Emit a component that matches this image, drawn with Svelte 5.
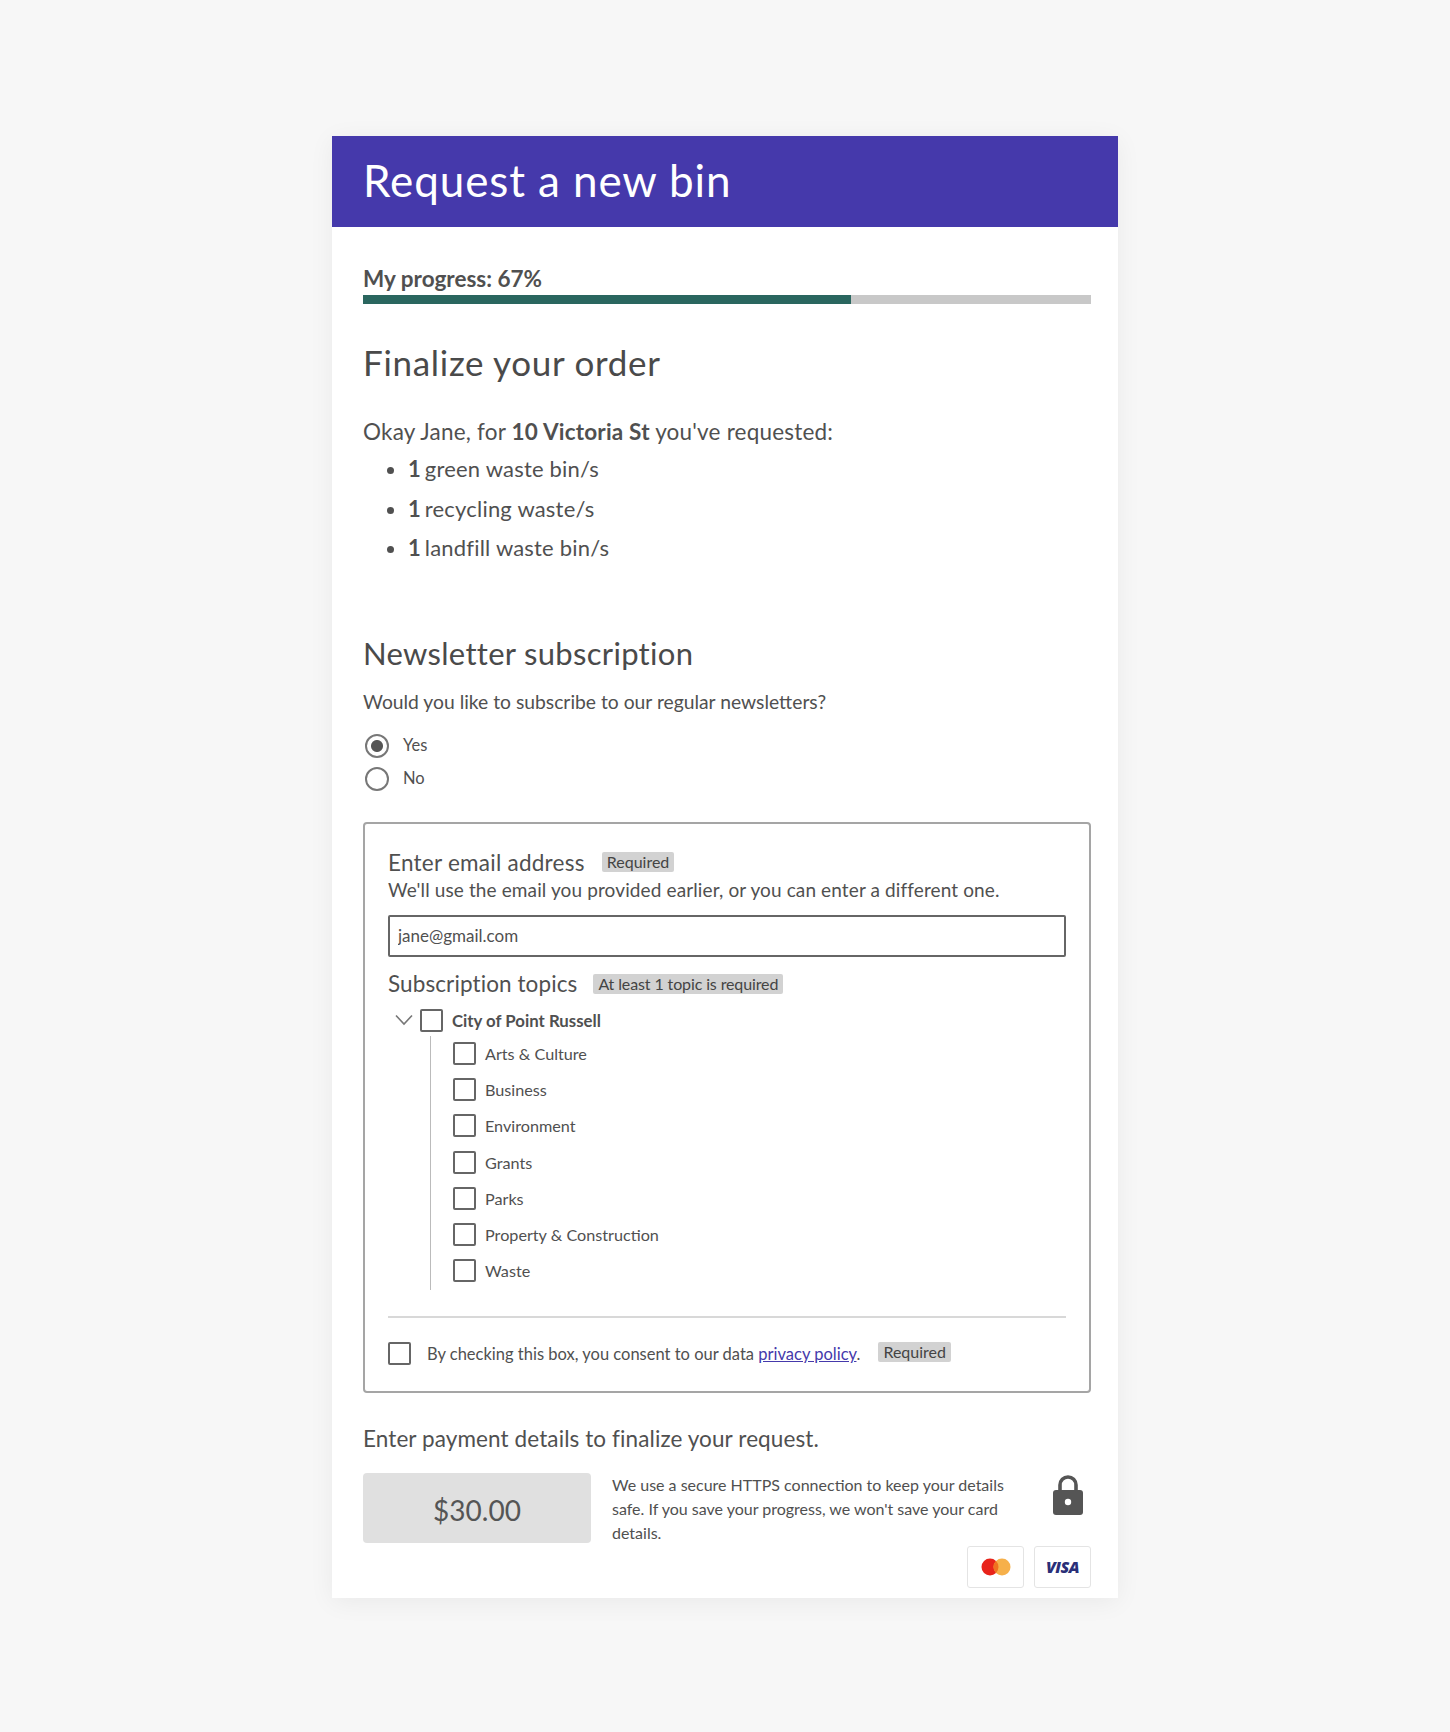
<script>
  const items = ["green waste bin/s", "recycling waste/s", "landfill waste bin/s"];
  const topics = ["Arts & Culture", "Business", "Environment", "Grants", "Parks", "Property & Construction", "Waste"];
  let subscribe = $state("yes");
  let email = $state("jane@gmail.com");
</script>

<div class="page">
  <main class="card">
    <header class="banner"><h1>Request a new bin</h1></header>

    <div class="body">
      <div class="progress">
        <div class="progress-label">My progress: 67%</div>
        <div class="track"><div class="fill"></div></div>
      </div>

      <h2 class="finalize">Finalize your order</h2>
      <p class="intro">Okay Jane, for <strong>10 Victoria St</strong> you've requested:</p>
      <ul class="order">
        {#each items as item}
          <li><strong>1</strong> {item}</li>
        {/each}
      </ul>

      <h2 class="news">Newsletter subscription</h2>
      <p class="question">Would you like to subscribe to our regular newsletters?</p>
      <div class="radios">
        <label class="radio"><input type="radio" bind:group={subscribe} value="yes" /><span>Yes</span></label>
        <label class="radio"><input type="radio" bind:group={subscribe} value="no" /><span>No</span></label>
      </div>

      <section class="box">
        <div class="field-title">
          <span class="field-name">Enter email address</span>
          <span class="tag">Required</span>
        </div>
        <p class="hint">We'll use the email you provided earlier, or you can enter a different one.</p>
        <input class="email" type="text" bind:value={email} aria-label="Email address" />

        <div class="field-title topics-title">
          <span class="field-name">Subscription topics</span>
          <span class="tag">At least 1 topic is required</span>
        </div>

        <div class="tree-head">
          <svg class="chevron" width="20" height="12" viewBox="0 0 20 12" fill="none" stroke="#777" stroke-width="1.6">
            <path d="M2 1.5 10 10 18 1.5" />
          </svg>
          <input class="check" type="checkbox" />
          <span class="tree-name">City of Point Russell</span>
        </div>
        <ul class="tree">
          {#each topics as topic}
            <li><label><input class="check" type="checkbox" /><span>{topic}</span></label></li>
          {/each}
        </ul>

        <div class="consent">
          <input class="check" type="checkbox" />
          <span class="consent-text">By checking this box, you consent to our data <a href="#privacy">privacy policy</a>.</span>
          <span class="tag">Required</span>
        </div>
      </section>

      <p class="pay-title">Enter payment details to finalize your request.</p>
      <div class="pay">
        <div class="price">$30.00</div>
        <p class="secure">We use a secure HTTPS connection to keep your details safe. If you save your progress, we won't save your card details.</p>
        <svg class="lock" width="32" height="41" viewBox="0 0 32 41">
          <path d="M8 17V10a8 8 0 0 1 16 0v7" fill="none" stroke="#555" stroke-width="3.6" />
          <rect x="1" y="15" width="30" height="25" rx="3" fill="#555" />
          <circle cx="16" cy="27" r="3.2" fill="#fff" />
        </svg>
      </div>
      <div class="brands">
        <div class="brand">
          <svg width="30" height="18" viewBox="0 0 30 18">
            <circle cx="9" cy="9" r="8.5" fill="#e8231a" />
            <circle cx="21" cy="9" r="8.5" fill="#f6b04a" />
            <path d="M15 3a8.5 8.5 0 0 1 0 12 8.5 8.5 0 0 1 0-12z" fill="#f0701f" />
          </svg>
        </div>
        <div class="brand visa">VISA</div>
      </div>
    </div>
  </main>
</div>

<style>
  :global(body) {
    margin: 0;
    background: #f7f7f7;
  }

  .page {
    height: 1732px;
    padding-top: 136px;
    box-sizing: border-box;
    font-family: Lato, "Liberation Sans", sans-serif;
    color: #505050;
  }

  .card {
    width: 786px;
    height: 1462px;
    margin: 0 auto;
    background: #fff;
    box-shadow: 0 4px 24px rgba(0, 0, 0, 0.06);
  }

  .banner {
    height: 91px;
    padding: 0 31px 4px;
    box-sizing: border-box;
    display: flex;
    align-items: center;
    background: #4539ab;
  }

  h1 {
    margin: 0;
    font-size: 44px;
    font-weight: 400;
    letter-spacing: 0.9px;
    color: #fff;
    line-height: 1;
  }

  .body {
    padding: 39px 27px 0 31px;
  }

  .progress-label {
    font-size: 22.5px;
    font-weight: 700;
    line-height: 26px;
  }

  .track {
    height: 9px;
    margin-top: 3px;
    background: #c8c8c8;
  }

  .fill {
    width: 67%;
    height: 100%;
    background: #2a665f;
  }

  h2 {
    margin: 0;
    font-weight: 400;
    color: #4a4a4a;
  }

  .finalize {
    margin-top: 37px;
    font-size: 35px;
    letter-spacing: 0.7px;
    line-height: 42px;
  }

  .intro {
    margin: 34px 0 0;
    font-size: 22.5px;
    letter-spacing: 0.2px;
    line-height: 30px;
  }

  .order {
    margin: 6px 0 0;
    padding: 0 0 0 45px;
    font-size: 22px;
    letter-spacing: 0.2px;
  }

  .order li {
    height: 39.5px;
    line-height: 32px;
  }

  .order strong {
    margin-right: -2px;
  }

  .news {
    margin-top: 62px;
    font-size: 31px;
    letter-spacing: 0.3px;
    line-height: 38px;
  }

  .question {
    margin: 17px 0 0;
    font-size: 19.3px;
    line-height: 26px;
  }

  .radios {
    margin-top: 19px;
    display: grid;
    row-gap: 8px;
  }

  .radio {
    display: flex;
    align-items: center;
    gap: 14px;
    font-size: 16.5px;
    height: 25px;
  }

  .radio span {
    margin-top: -3px;
  }

  .radio input {
    appearance: none;
    width: 24px;
    height: 24px;
    margin: 0 0 0 2px;
    border: 2px solid #777;
    border-radius: 50%;
    background: #fff;
    box-sizing: border-box;
  }

  .radio input:checked {
    background: radial-gradient(circle, #555 0 5.5px, #fff 6.5px);
  }

  .box {
    margin-top: 30px;
    height: 571px;
    box-sizing: border-box;
    padding: 25px 23px 0 23px;
    border: 2px solid #a5a5a5;
    border-radius: 4px;
  }

  .field-title {
    display: flex;
    align-items: center;
    height: 28px;
  }

  .field-name {
    font-size: 22.5px;
    letter-spacing: 0.25px;
    margin-right: 17px;
  }

  .tag {
    margin-top: -2px;
    padding: 0 5px;
    background: #d2d2d2;
    border-radius: 2px;
    font-size: 16px;
    line-height: 20px;
    color: #444;
  }

  .hint {
    margin: 0;
    font-size: 19px;
    letter-spacing: 0.12px;
    line-height: 26px;
  }

  .email {
    display: block;
    width: 100%;
    height: 42px;
    margin-top: 12px;
    padding: 0 8px;
    box-sizing: border-box;
    border: 2px solid #666;
    border-radius: 2px;
    font: 400 17px Lato, "Liberation Sans", sans-serif;
    color: #505050;
  }

  .topics-title {
    margin-top: 13px;
  }

  .topics-title .field-name {
    letter-spacing: 0.1px;
    margin-right: 16px;
  }

  .topics-title .tag {
    letter-spacing: -0.12px;
    margin-top: 0;
  }

  .check {
    appearance: none;
    flex: none;
    width: 23px;
    height: 23px;
    margin: 0;
    border: 2px solid #666;
    border-radius: 2px;
    background: #fff;
    box-sizing: border-box;
  }

  .tree-head {
    display: flex;
    align-items: center;
    margin-top: 11px;
    padding-left: 6px;
    height: 24px;
  }

  .chevron {
    margin-right: 6px;
    margin-top: -2px;
  }

  .tree-name {
    margin-left: 9px;
    font-size: 16.8px;
    font-weight: 700;
  }

  .tree {
    list-style: none;
    margin: 3px 0 0 42px;
    padding: 0 0 3px 22px;
    height: 251px;
    border-left: 1px solid #bbb;
  }

  .tree li {
    height: 36.2px;
  }

  .tree label {
    display: flex;
    align-items: center;
    gap: 9px;
    height: 36px;
    font-size: 16.2px;
  }

  .consent {
    display: flex;
    align-items: center;
    margin-top: 26px;
    padding-top: 24px;
    border-top: 2px solid #d8d8d8;
    font-size: 16.5px;
  }

  .consent-text {
    margin-left: 16px;
    margin-right: 18px;
    margin-top: 2px;
  }

  .consent .tag {
    margin-top: -3px;
  }

  a {
    color: #4539ab;
  }

  .pay-title {
    margin: 31px 0 0;
    font-size: 22.5px;
    letter-spacing: 0.1px;
    line-height: 30px;
  }

  .pay {
    display: flex;
    align-items: flex-start;
    margin-top: 19px;
  }

  .price {
    width: 228px;
    height: 70px;
    flex: none;
    display: grid;
    place-items: center;
    padding-top: 4px;
    box-sizing: border-box;
    background: #e0e0e0;
    border-radius: 4px;
    font-size: 28px;
    color: #555;
  }

  .secure {
    flex: none;
    width: 410px;
    margin: 0 0 0 21px;
    font-size: 16px;
    line-height: 24px;
  }

  .lock {
    flex: none;
    margin: 2px 0 0 30px;
  }

  .brands {
    display: flex;
    justify-content: flex-end;
    gap: 10px;
    margin-top: 1px;
  }

  .brand {
    width: 57px;
    height: 42px;
    display: grid;
    place-items: center;
    box-sizing: border-box;
    border: 1px solid #e4e4e4;
    border-radius: 3px;
  }

  .visa {
    font-family: "Open Sans", "Liberation Sans", sans-serif;
    font-size: 16px;
    font-weight: 800;
    font-style: italic;
    letter-spacing: -0.5px;
    color: #2a2f78;
  }
</style>
